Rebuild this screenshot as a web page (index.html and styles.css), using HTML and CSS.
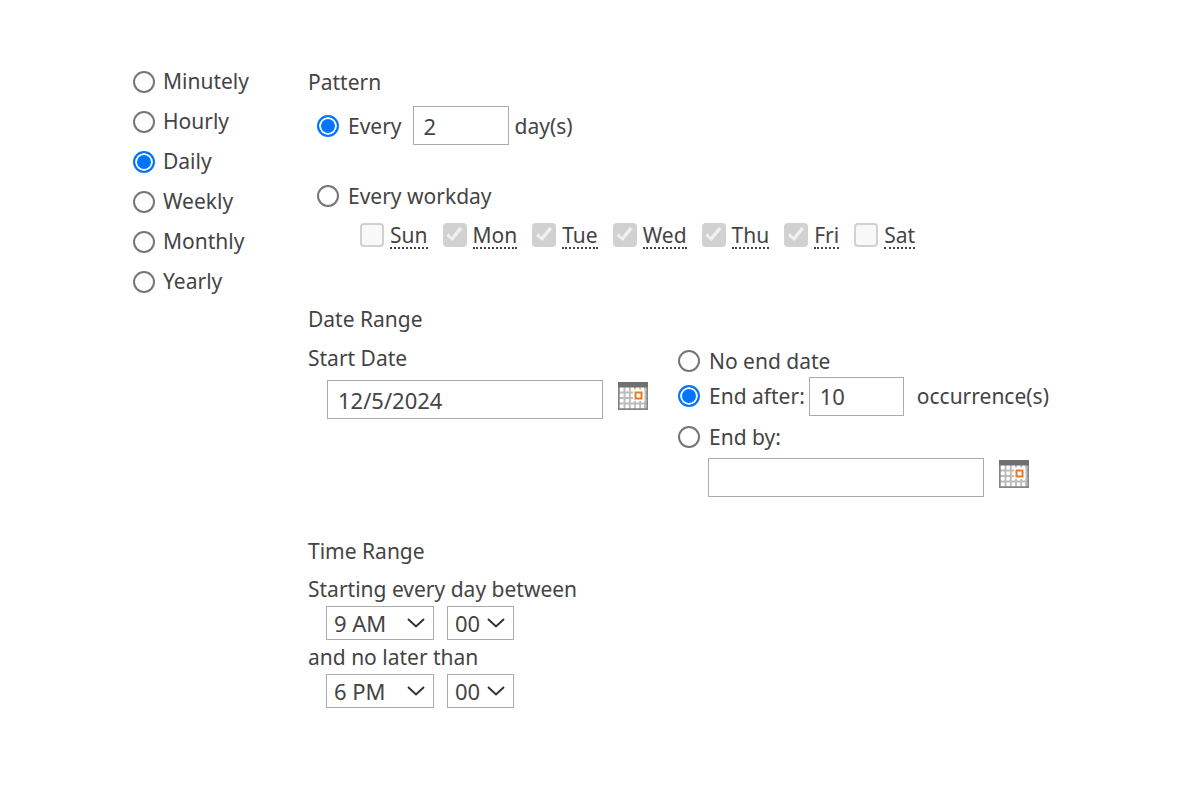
FILE: index.html
```html
<!DOCTYPE html>
<html lang="en">
<head>
<meta charset="utf-8">
<title>Schedule</title>
<link rel="stylesheet" href="styles.css">
</head>
<body>
<svg class="sprite" aria-hidden="true">
  <symbol id="calendar" viewBox="0 0 30 28">
    <path fill="#fff" d="M0 0h30v28H0z"/>
    <path stroke="#bcbcbc" stroke-width="1.900" fill="none" d="M6.500 5v22M11.800 5v22M17 5v22M22.200 5v22M27 5v22M1 10.500h28M1 16h28M1 21.500h28"/>
    <path stroke="#858585" stroke-width="1.700" fill="none" d="M.850 5v22.150h28.300V5"/>
    <path fill="#707070" d="M0 0h30v5.500H0z"/>
    <path fill="#fff" d="M15 7.500h11.500v11.500H15z"/>
    <path stroke="#ee7a20" stroke-width="2" fill="#fff" d="M17.500 10.500h6v6h-6z"/>
  </symbol>
</svg>
<form class="schedule">
  <div class="frequency" role="radiogroup" aria-label="Frequency">
    <label class="choice"><input class="radio" type="radio" name="freq">Minutely</label>
    <label class="choice"><input class="radio" type="radio" name="freq">Hourly</label>
    <label class="choice"><input class="radio" type="radio" name="freq" checked>Daily</label>
    <label class="choice"><input class="radio" type="radio" name="freq">Weekly</label>
    <label class="choice"><input class="radio" type="radio" name="freq">Monthly</label>
    <label class="choice"><input class="radio" type="radio" name="freq">Yearly</label>
  </div>
  <div class="details">
    <section class="pattern">
      <h2 class="heading">Pattern</h2>
      <div class="every">
        <label class="option"><input class="radio" type="radio" name="pattern" checked>Every</label>
        <input class="field short" id="interval" type="text" value="2" aria-label="Interval in days">
        <label class="unit" for="interval">day(s)</label>
      </div>
      <label class="option workday"><input class="radio" type="radio" name="pattern">Every workday</label>
      <div class="days">
        <label class="day"><input class="check" type="checkbox" disabled><abbr title="Sunday">Sun</abbr></label>
        <label class="day"><input class="check" type="checkbox" checked disabled><abbr title="Monday">Mon</abbr></label>
        <label class="day"><input class="check" type="checkbox" checked disabled><abbr title="Tuesday">Tue</abbr></label>
        <label class="day"><input class="check" type="checkbox" checked disabled><abbr title="Wednesday">Wed</abbr></label>
        <label class="day"><input class="check" type="checkbox" checked disabled><abbr title="Thursday">Thu</abbr></label>
        <label class="day"><input class="check" type="checkbox" checked disabled><abbr title="Friday">Fri</abbr></label>
        <label class="day"><input class="check" type="checkbox" disabled><abbr title="Saturday">Sat</abbr></label>
      </div>
    </section>
    <section class="dates">
      <h2 class="heading">Date Range</h2>
      <div class="range">
        <div class="start">
          <label class="start-label" for="start">Start Date</label>
          <div class="picker">
            <input class="field long" id="start" type="text" value="12/5/2024">
            <button class="calendar" type="button" aria-label="Choose start date"><svg class="icon"><use href="#calendar"/></svg></button>
          </div>
        </div>
        <div class="end">
          <label class="option end-none"><input class="radio" type="radio" name="end">No end date</label>
          <div class="end-after">
            <label class="option"><input class="radio" type="radio" name="end" checked>End after:</label>
            <input class="field short" id="count" type="text" value="10" aria-label="Number of occurrences">
            <label class="occurrences" for="count">occurrence(s)</label>
          </div>
          <label class="option end-by"><input class="radio" type="radio" name="end">End by:</label>
          <div class="picker end-picker">
            <input class="field long" type="text" aria-label="End date">
            <button class="calendar" type="button" aria-label="Choose end date"><svg class="icon"><use href="#calendar"/></svg></button>
          </div>
        </div>
      </div>
    </section>
    <section class="times">
      <h2 class="heading">Time Range</h2>
      <label class="time-label" for="from">Starting every day between</label>
      <div class="time">
        <span class="drop hour"><select class="select" id="from"><option>9 AM</option></select><svg class="arrow" viewBox="0 0 18 10"><path d="M1 1l8 7.500L17 1"/></svg></span>
        <span class="drop minute"><select class="select" aria-label="Start minutes"><option>00</option></select><svg class="arrow" viewBox="0 0 18 10"><path d="M1 1l8 7.500L17 1"/></svg></span>
      </div>
      <label class="time-label" for="to">and no later than</label>
      <div class="time">
        <span class="drop hour"><select class="select" id="to"><option>6 PM</option></select><svg class="arrow" viewBox="0 0 18 10"><path d="M1 1l8 7.500L17 1"/></svg></span>
        <span class="drop minute"><select class="select" aria-label="End minutes"><option>00</option></select><svg class="arrow" viewBox="0 0 18 10"><path d="M1 1l8 7.500L17 1"/></svg></span>
      </div>
    </section>
  </div>
</form>
</body>
</html>
```
FILE: styles.css
```css
* { box-sizing: border-box; }
body {
  margin: 0;
  background: #fff;
  color: #444;
  font: 21px/26px "Segoe UI", "Noto Sans", "Open Sans", sans-serif;
}
input, select, button { font: inherit; color: inherit; margin: 0; }
.sprite { display: none; }
.schedule { display: flex; padding: 62px 24px 40px 133px; }
.frequency { flex: none; width: 175px; }
.choice { display: flex; align-items: flex-start; gap: 8px; height: 40px; line-height: 38px; }
.choice .radio { margin-top: 9px; }
.details { flex: 1; }
.heading { margin: 0; font-size: inherit; font-weight: 400; line-height: 40px; }

.radio {
  appearance: none;
  flex: none;
  width: 22px;
  height: 22px;
  border: 2px solid #767676;
  border-radius: 50%;
  background: #fff;
}
.radio:checked {
  border-color: #0075ff;
  background: #0075ff;
  box-shadow: inset 0 0 0 2px #fff;
}
.option { display: flex; align-items: center; gap: 9px; }

.field {
  height: 39px;
  padding: 0 10px;
  border: 1px solid #ababab;
  border-radius: 0;
  background: #fff;
  font-size: 22px;
}
.short { width: 96px; }
.long { width: 276px; }

.every { display: flex; align-items: center; padding: 4px 9px; }
.every .short { margin: 0 6px 0 11px; }
.workday { height: 40px; margin-top: 27px; padding-left: 9px; }
.days { display: flex; gap: 15px; height: 38px; padding-left: 52px; }
.day { display: flex; align-items: center; gap: 6px; }
.day abbr { padding-top: 2px; line-height: 24px; text-decoration: none; border-bottom: 2px dotted #444; }
.check {
  appearance: none;
  display: grid;
  flex: none;
  width: 24px;
  height: 24px;
  border: 2px solid #d1d1d1;
  border-radius: 4px;
  background: #f8f8f8;
}
.check:checked { background: #d1d1d1; }
.check:checked::after {
  content: "";
  background: #f0f0f0;
  clip-path: polygon(2px 11px, 4px 8px, 7px 12px, 15px 2px, 18px 4px, 8px 16px);
}

.dates { margin-top: 45px; }
.range { display: grid; grid-template-columns: 370px 1fr; }
.start-label { display: block; height: 41px; line-height: 38px; }
.picker { display: flex; gap: 15px; padding-left: 19px; }
.calendar { display: block; height: 28px; padding: 0; margin-top: 2px; border: 0; background: none; }
.icon { display: block; width: 30px; height: 28px; }
.end-none { margin-top: 9px; }
.end-after { display: flex; align-items: center; height: 44px; }
.end-after .short { margin: 0 13px 0 4px; width: 95px; }
.end-by { height: 38px; }
.end-picker { padding-left: 30px; padding-top: 2px; }

.times { margin-top: 34px; }
.time-label { display: block; line-height: 34px; }
.heading + .time-label { padding-top: 1px; }
.time { display: flex; gap: 13px; padding-left: 18px; }
.drop { display: grid; align-items: center; }
.hour { width: 108px; }
.minute { width: 67px; }
.select {
  appearance: none;
  grid-area: 1 / 1;
  width: 100%;
  height: 34px;
  padding: 0 7px;
  border: 1px solid #ababab;
  border-radius: 0;
  background: #fff;
  font-size: 22px;
}
.arrow {
  grid-area: 1 / 1;
  justify-self: end;
  width: 18px;
  height: 10px;
  margin-right: 9px;
  fill: none;
  stroke: #333;
  stroke-width: 2;
  pointer-events: none;
}
```
